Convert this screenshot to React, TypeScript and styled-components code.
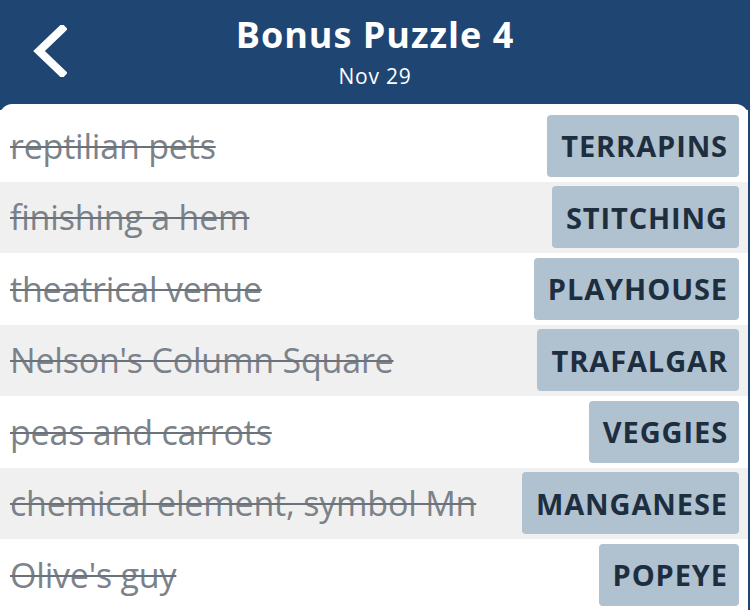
import React from 'react';
import styled, { createGlobalStyle } from 'styled-components';

const GlobalStyle = createGlobalStyle`
  html, body {
    margin: 0;
    padding: 0;
    background: #1f4572;
    font-family: "Open Sans", "Noto Sans", sans-serif;
  }
`;

const Page = styled.div`
  width: 750px;
  height: 610px;
  overflow: hidden;
  display: flex;
  flex-direction: column;
  background: #1f4572;
`;

const Header = styled.header`
  height: 104px;
  flex-shrink: 0;
  display: grid;
  grid-template-columns: 90px 1fr 90px;
  align-items: center;
  color: #ffffff;
`;

const BackButton = styled.button`
  border: none;
  background: none;
  padding: 0 0 0 33px;
  height: 104px;
  display: flex;
  align-items: center;
  cursor: pointer;
  margin-top: -2px;
`;

const TitleBlock = styled.div`
  display: flex;
  flex-direction: column;
  align-items: center;
  margin-top: -2px;
`;

const Title = styled.h1`
  margin: 0;
  font-size: 36px;
  font-weight: 700;
  line-height: 44px;
  letter-spacing: 1px;
`;

const Subtitle = styled.div`
  font-size: 21px;
  line-height: 28px;
  margin-top: 5px;
  letter-spacing: 0.8px;
`;

const Panel = styled.main`
  flex: 1;
  background: #ffffff;
  border-radius: 12px 12px 0 0;
  margin-right: 2px;
  padding-top: 6px;
`;

const Row = styled.div<{ $shaded: boolean }>`
  height: 71.5px;
  display: flex;
  align-items: center;
  justify-content: space-between;
  padding: 0 9px 0 10px;
  box-sizing: border-box;
  background: ${(p) => (p.$shaded ? '#f0f0f0' : '#ffffff')};
`;

const Clue = styled.span`
  font-size: 34px;
  color: #7b828a;
  text-decoration: line-through;
  text-decoration-color: #6b727a;
  text-decoration-thickness: 2px;
  letter-spacing: -0.2px;
  line-height: 40px;
`;

const Answer = styled.span`
  height: 62px;
  display: flex;
  align-items: center;
  padding: 0 11px 0 14px;
  background: #b0c1cf;
  border-radius: 4px;
  font-size: 29px;
  font-weight: 700;
  color: #1d2e3f;
  letter-spacing: 0.9px;
`;

const words = [
  { clue: 'reptilian pets', answer: 'TERRAPINS' },
  { clue: 'finishing a hem', answer: 'STITCHING' },
  { clue: 'theatrical venue', answer: 'PLAYHOUSE' },
  { clue: "Nelson's Column Square", answer: 'TRAFALGAR' },
  { clue: 'peas and carrots', answer: 'VEGGIES' },
  { clue: 'chemical element, symbol Mn', answer: 'MANGANESE' },
  { clue: "Olive's guy", answer: 'POPEYE' },
];

const App = () => {
  return (
    <Page>
      <GlobalStyle />
      <Header>
        <BackButton aria-label="Back">
          <svg width="34" height="52" viewBox="0 0 34 52">
            <polyline
              points="29,4 6,26 29,48"
              fill="none"
              stroke="#ffffff"
              strokeWidth="8"
              strokeLinecap="square"
            />
          </svg>
        </BackButton>
        <TitleBlock>
          <Title>Bonus Puzzle 4</Title>
          <Subtitle>Nov 29</Subtitle>
        </TitleBlock>
        <div />
      </Header>
      <Panel>
        {words.map((w, i) => (
          <Row key={w.answer} $shaded={i % 2 === 1}>
            <Clue>{w.clue}</Clue>
            <Answer>{w.answer}</Answer>
          </Row>
        ))}
      </Panel>
    </Page>
  );
};

export default App;
